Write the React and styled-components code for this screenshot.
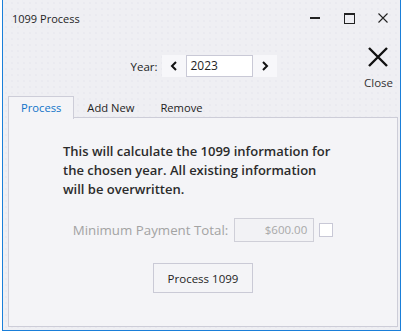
import React from "react";
import styled, { createGlobalStyle } from "styled-components";

const Global = createGlobalStyle`
html, body {
margin:0;
padding:0;
background:#ffffff;
}
body {
font-family: "Open Sans", "Noto Sans", sans-serif;
color:#1e1e1e;
}
`;

const Window = styled.div`
margin-left:2px;
width:399px;
height:331px;
box-sizing:border-box;
border:1px solid #1a7fd9;
border-top:none;
background-color:#efeff3;
background-image: radial-gradient(#e5e5eb 0.6px, transparent 0.8px);
background-size:6px 6px;
display:flex;
flex-direction:column;
`;

const TitleBar = styled.div`
height:36px;
display:flex;
align-items:center;
padding-left:9px;
font-size:11px;
`;

const Title = styled.span`
flex:1;
`;

const WinButton = styled.div`
width:34px;
height:36px;
display:flex;
align-items:center;
justify-content:center;
`;

const Header = styled.div`
height:60px;
display:grid;
grid-template-columns:1fr auto 1fr;
align-items:center;
`;

const YearGroup = styled.div`
grid-column:2;
display:flex;
align-items:center;
gap:4px;
font-size:11.5px;
margin-left:4px;
`;

const Spinner = styled.div`
display:flex;
align-items:center;
height:22px;
background:#f7f7fa;
`;

const Arrow = styled.div`
width:24px;
height:22px;
display:flex;
align-items:center;
justify-content:center;
`;

const YearBox = styled.div`
width:61px;
height:20px;
border:1px solid #c9c9d6;
background:#ffffff;
font-size:12px;
line-height:20px;
padding-left:4px;
box-sizing:content-box;
`;

const CloseBlock = styled.div`
grid-column:3;
justify-self:end;
display:flex;
flex-direction:column;
align-items:center;
gap:8px;
padding-right:7px;
padding-top:4px;
font-size:11.5px;
color:#333;
`;

const Tabs = styled.div`
margin:0 2px 3px 5px;
flex:1;
display:flex;
flex-direction:column;
`;

const TabRow = styled.div`
display:flex;
height:22px;
`;

const Tab = styled.div`
padding:0 12px;
font-size:11.2px;
line-height:21px;
box-sizing:border-box;
color:${p => (p.active ? "#0f73c9" : "#1e1e1e")};
background:${p => (p.active ? "#f4f4f7" : "transparent")};
border:1px solid ${p => (p.active ? "#cdcdd8" : "transparent")};
border-bottom:none;
position:relative;
z-index:1;
height:${p => (p.active ? "23px" : "22px")};
`;

const Panel = styled.div`
flex:1;
margin-top:-1px;
border:1px solid #cdcdd8;
background:#f4f4f7;
display:flex;
flex-direction:column;
align-items:center;
padding-top:24px;
`;

const Message = styled.p`
margin:0 0 0 -4px;
width:276px;
font-size:13px;
font-weight:600;
line-height:19px;
color:#2b2b2b;
`;

const FieldRow = styled.div`
display:flex;
align-items:center;
gap:6px;
margin-top:19px;
`;

const FieldLabel = styled.span`
font-size:13.3px;
color:#a3a3a3;
`;

const AmountBox = styled.div`
width:72px;
height:22px;
border:1px solid #cfcfd8;
background:#f2f2f5;
color:#a8a8a8;
font-size:11.5px;
line-height:22px;
text-align:right;
padding-right:6px;
`;

const Check = styled.div`
width:12px;
height:12px;
border:1px solid #c8c8d6;
background:#ffffff;
margin-left:-1px;
`;

const ActionButton = styled.div`
margin-top:21px;
width:98px;
height:28px;
border:1px solid #cacad6;
background:#f4f4f7;
display:flex;
align-items:center;
justify-content:center;
font-size:11.5px;
`;

const App = () => (
  <>
    <Global />
    <Window>
      <TitleBar>
        <Title>1099 Process</Title>
        <WinButton>
          <svg width="10" height="10" viewBox="0 0 10 10">
            <rect x="0" y="4" width="10" height="2" fill="#222" />
          </svg>
        </WinButton>
        <WinButton>
          <svg width="11" height="11" viewBox="0 0 11 11">
            <rect x="0.5" y="0.5" width="10" height="10" fill="none" stroke="#222" />
            <rect x="0" y="0" width="11" height="2" fill="#222" />
          </svg>
        </WinButton>
        <WinButton>
          <svg width="10" height="10" viewBox="0 0 10 10">
            <path d="M0.5 0.5 L9.5 9.5 M9.5 0.5 L0.5 9.5" stroke="#222" strokeWidth="1.1" />
          </svg>
        </WinButton>
      </TitleBar>
      <Header>
        <YearGroup>
          <span>Year:</span>
          <Spinner>
            <Arrow>
              <svg width="8" height="10" viewBox="0 0 8 10">
                <path d="M6 1 L2 5 L6 9" fill="none" stroke="#111" strokeWidth="2" />
              </svg>
            </Arrow>
            <YearBox>2023</YearBox>
            <Arrow>
              <svg width="8" height="10" viewBox="0 0 8 10">
                <path d="M2 1 L6 5 L2 9" fill="none" stroke="#111" strokeWidth="2" />
              </svg>
            </Arrow>
          </Spinner>
        </YearGroup>
        <CloseBlock>
          <svg width="20" height="20" viewBox="0 0 20 20">
            <path d="M1 1 L19 19 M19 1 L1 19" stroke="#111" strokeWidth="2.4" />
          </svg>
          <span>Close</span>
        </CloseBlock>
      </Header>
      <Tabs>
        <TabRow>
          <Tab active>Process</Tab>
          <Tab>Add New</Tab>
          <Tab>Remove</Tab>
        </TabRow>
        <Panel>
          <Message>
            This will calculate the 1099 information for the chosen year. All
            existing information will be overwritten.
          </Message>
          <FieldRow>
            <FieldLabel>Minimum Payment Total:</FieldLabel>
            <AmountBox>$600.00</AmountBox>
            <Check />
          </FieldRow>
          <ActionButton>Process 1099</ActionButton>
        </Panel>
      </Tabs>
    </Window>
  </>
);

export default App;
